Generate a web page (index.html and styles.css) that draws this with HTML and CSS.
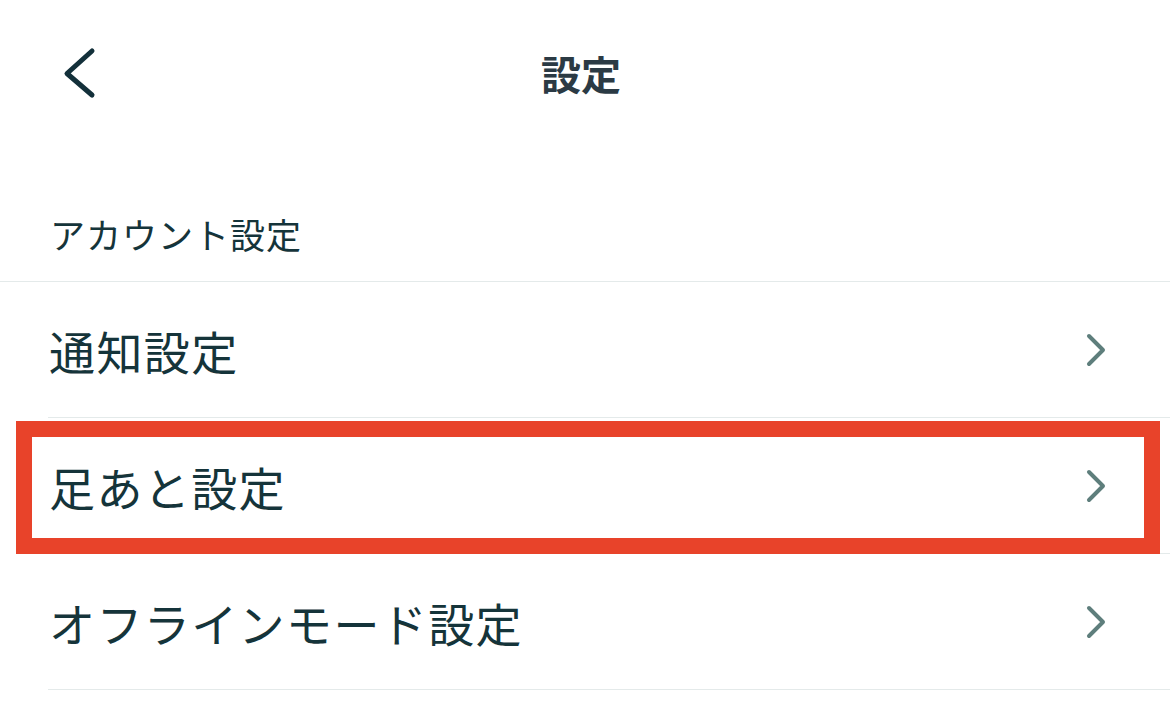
FILE: index.html
```html
<!DOCTYPE html>
<html lang="ja">

<head>
    <meta charset="UTF-8">
    <meta name="viewport" content="width=device-width, initial-scale=1.0">
    <title>設定</title>
    <link rel="stylesheet" href="styles.css">
</head>

<body>
    <header class="topbar">
        <a class="back" href="#" aria-label="戻る">
            <svg width="34" height="52" viewBox="0 0 34 52">
                <path d="M29 4 L4 26.5 L29 48" fill="none" stroke="#13303a" stroke-width="5" stroke-linecap="round" stroke-linejoin="round" />
            </svg>
        </a>
        <h1>設定</h1>
        <span></span>
    </header>

    <main>
        <div class="section-label">アカウント設定</div>
        <ul class="menu">
            <li class="menu-item">
                <span>通知設定</span>
                <svg class="chevron" width="24" height="36" viewBox="0 0 24 36">
                    <path d="M5 4 L19 18 L5 32" fill="none" stroke="#5e7e7c" stroke-width="4" stroke-linecap="round" stroke-linejoin="round" />
                </svg>
            </li>
            <li class="menu-item highlighted">
                <span>足あと設定</span>
                <svg class="chevron" width="24" height="36" viewBox="0 0 24 36">
                    <path d="M5 4 L19 18 L5 32" fill="none" stroke="#5e7e7c" stroke-width="4" stroke-linecap="round" stroke-linejoin="round" />
                </svg>
                <div class="marker"></div>
            </li>
            <li class="menu-item">
                <span>オフラインモード設定</span>
                <svg class="chevron" width="24" height="36" viewBox="0 0 24 36">
                    <path d="M5 4 L19 18 L5 32" fill="none" stroke="#5e7e7c" stroke-width="4" stroke-linecap="round" stroke-linejoin="round" />
                </svg>
            </li>
        </ul>
    </main>
</body>

</html>
```

FILE: styles.css
```css
/* General styles */
* {
    box-sizing: border-box;
}

body {
    font-family: "Noto Sans CJK JP", "Noto Sans", sans-serif;
    margin: 0;
    padding: 0;
    background-color: #ffffff;
    color: #15343a;
    overflow: hidden;
}

.topbar {
    height: 146px;
    display: grid;
    grid-template-columns: 1fr auto 1fr;
    align-items: center;
    padding-right: 8px;
}

.back {
    display: flex;
    width: 34px;
    height: 52px;
    margin-left: 63px;
}

.topbar h1 {
    margin: 0;
    font-size: 40px;
    font-weight: 700;
    color: #2b3a44;
    line-height: 1;
}

.section-label {
    height: 136px;
    display: flex;
    align-items: flex-end;
    padding: 0 0 30px 50px;
    font-size: 35px;
    letter-spacing: 1px;
    line-height: 1;
    border-bottom: 1px solid #e4eaea;
}

.menu {
    list-style-type: none;
    margin: 0;
    padding: 0;
}

.menu-item {
    position: relative;
    height: 136px;
    margin-left: 48px;
    padding: 0 62px 0 1px;
    display: flex;
    justify-content: space-between;
    align-items: center;
    font-size: 46px;
    letter-spacing: 1.4px;
    line-height: 1;
    border-bottom: 1px solid #e4eaea;
}

.chevron {
    display: block;
}

/* red annotation frame */
.marker {
    position: absolute;
    left: -32px;
    top: 3px;
    width: 1144px;
    height: 133px;
    border: 16px solid #e8432a;
}
```
